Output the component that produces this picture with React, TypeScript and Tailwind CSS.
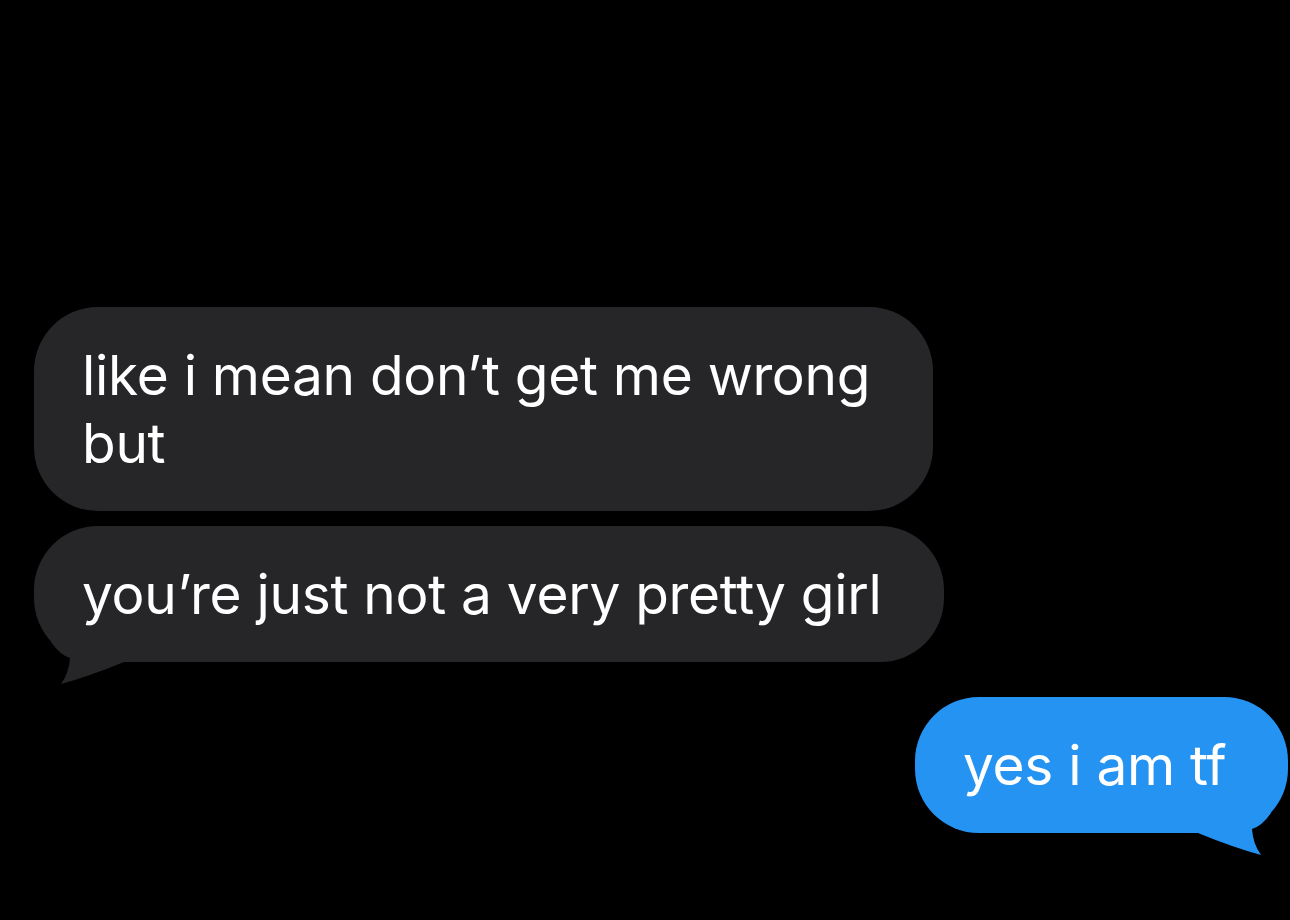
import React from "react";

const GRAY = "#262628";
const BLUE = "#2593f1";

// tail path drawn for a bottom-left tail; svg top sits 60px above the bubble's bottom edge
const TAIL = "M17 40 Q 26 53, 36 56 Q 35 71, 27 82 Q 56 74, 90 60 L 90 18 L 17 18 Z";

const Tail = ({ color, side }: { color: string; side: "left" | "right" }) => (
  <svg
    className={side === "left" ? "absolute bottom-[-24px] left-0" : "absolute bottom-[-24px] right-0"}
    width="100"
    height="84"
    viewBox="0 0 100 84"
    fill={color}
  >
    <path d={TAIL} transform={side === "right" ? "translate(100 0) scale(-1 1)" : undefined} />
  </svg>
);

const Bubble = ({
  color,
  tail,
  className,
  children,
}: {
  color: string;
  tail?: "left" | "right";
  className: string;
  children: React.ReactNode;
}) => (
  <div
    className={`relative rounded-[64px] py-[34px] pl-[48px] pr-[40px] text-[55px] leading-[68px] tracking-[-0.3px] ${className}`}
    style={{ backgroundColor: color }}
  >
    {tail && <Tail color={color} side={tail} />}
    <span className="relative">{children}</span>
  </div>
);

export default function App() {
  return (
    <div
      className="flex min-h-[920px] w-full flex-col bg-black pt-[307px] text-white"
      style={{ fontFamily: "Inter, 'Noto Sans', sans-serif" }}
    >
      <div className="flex flex-col items-start gap-[15px] pl-[34px]">
        <Bubble color={GRAY} className="w-[899px]">
          like i mean don’t get me wrong but
        </Bubble>
        <Bubble color={GRAY} tail="left" className="w-[910px]">
          you’re just not a very pretty girl
        </Bubble>
      </div>
      <div className="mt-[35px] flex justify-end pr-[2px]">
        <Bubble color={BLUE} tail="right" className="w-[373px]">
          yes i am tf
        </Bubble>
      </div>
    </div>
  );
}
